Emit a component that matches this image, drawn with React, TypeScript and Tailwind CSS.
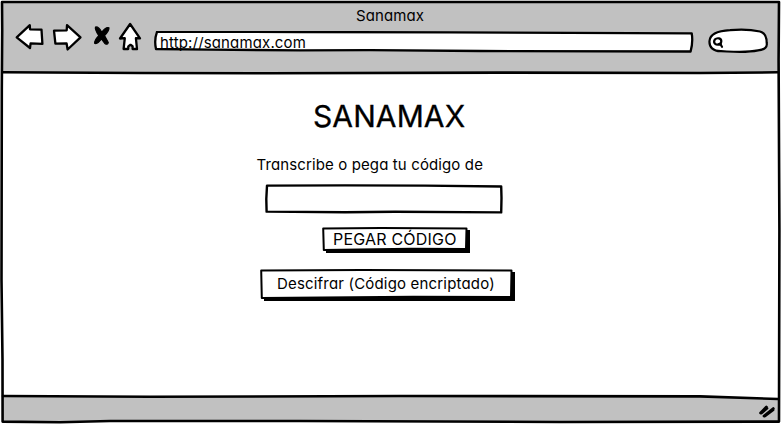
import type { ReactNode } from "react";

const line = {
  fill: "none",
  stroke: "#000",
  strokeLinecap: "round" as const,
  strokeLinejoin: "round" as const,
};

function WindowFrame() {
  return (
    <svg className="pointer-events-none absolute inset-0" width="781" height="424" viewBox="0 0 781 424" {...line} strokeWidth="2.6">
      <path d="M2 2 L779 2 L778.6 60 L779.4 230 L779 421.6 L560 422 L300 421 L110 421 L60 422.2 L2.6 421.6 L2.5 360 L1.5 280 L1.8 90 L2.2 30 Z" />
      <path d="M3 72.3 L140 73 L270 73.2 L500 72.6 L700 73 L778 72.3" />
      <path d="M3 396 L150 396.8 L400 396 L700 396.4 L778 399" />
    </svg>
  );
}

function Navigation() {
  return (
    <svg className="block shrink-0" width="128" height="32" viewBox="14 20 128 32" {...line} strokeWidth="2.3">
      <path fill="#fff" d="M16.7 37.4 L29.8 25.2 L30 29.3 L41.5 29.6 L42.4 43.8 L30.6 43.3 L30 48 Z" />
      <path fill="#fff" d="M54 30.6 L66.7 30.3 L67 25.2 L80.5 37.3 L67.6 49.5 L66.6 43.5 L55.4 43.7 Z" />
      <path fill="#000" strokeWidth="1.2" d="M95.5 27 Q99 26.6 101.7 32.3 Q106 26.5 109 27.8 Q109.2 31 104.5 35.6 L108.3 42.5 Q107.8 45.4 104.8 43.4 L101.4 39 Q97 45 94.6 43.3 Q94.4 40 98.8 35.8 Q94.5 29 95.5 27 Z" />
      <path fill="#fff" d="M130.1 24 L140 38.4 L135.9 38.2 L137 49 L132.6 49 L132.6 46.2 L130.5 44.8 L128.3 46.4 L128.2 49 L123.6 49 L124.8 38.2 L120 38.5 Z" />
    </svg>
  );
}

function AddressBar() {
  return (
    <div className="relative mt-[11px] ml-[11px] h-[22px] w-[541px] shrink-0">
      <svg className="absolute inset-0" width="541" height="22" viewBox="153 31 541 22" {...line} strokeWidth="2.3">
        <path fill="#fff" d="M157 31.9 L300 32 L450 32.4 L691.7 33.3 Q693.2 42 690.6 51.5 L480 51 L370 50.2 L300 50.4 L210 49.6 L156 49 Q154 40 157 31.9 Z" />
      </svg>
      <div className="relative ml-[7px] h-[22px] pt-[2px] text-[15px] leading-[20px] tracking-[0.15px]">http://sanamax.com</div>
    </div>
  );
}

function SearchBox() {
  return (
    <svg className="mt-[8px] ml-[14px] block shrink-0" width="62" height="26" viewBox="708 28 62 26" {...line} strokeWidth="2.2">
      <path fill="#fff" d="M709.5 41 C710 34 719 30.8 730 30.2 C742 29.2 752 29.8 760 31.5 C766 33 766.7 38 766.7 43 C767.5 47 765 49.4 758 50.4 C746 53 733 51.7 721 51.2 C713 51.3 709 47 709.5 41 Z" />
      <path d="M721 44.2 C715 46 713 42.5 714.8 39.6 C717 37.3 721.6 38 721.3 41.4 C721.2 43 720.3 44 718.7 44 M720.3 44 L722 46.8" />
    </svg>
  );
}

function Button({ width, height, className, children }: { width: number; height: number; className: string; children: ReactNode }) {
  return (
    <button className={`relative block ${className}`}>
      <svg className="absolute inset-0" width={width} height={height} {...line} strokeWidth="2">
        <path fill="#000" stroke="none" d={`M4 4 L${width} 3 L${width} ${height} L4 ${height} Z`} />
        <path fill="#fff" d={`M1.2 1.5 L${width * 0.4} 1.1 L${width - 3.5} 1.6 L${width - 4} ${height - 4} L${width * 0.6} ${height - 4.2} L1.8 ${height - 3} Z`} />
      </svg>
      <span className="relative block whitespace-nowrap text-left">{children}</span>
    </button>
  );
}

export default function App() {
  return (
    <div className="relative flex h-[424px] w-[781px] flex-col overflow-hidden bg-white font-['Inter','Liberation_Sans',sans-serif] text-black [font-feature-settings:'cv11']">
      <header className="mx-[2px] mt-[2px] h-[71px] shrink-0 bg-[#c1c1c1]">
        <div className="h-[18px] pt-[4px] pl-[354px] text-[15px] leading-[20px] tracking-[0.1px]">Sanamax</div>
        <div className="flex h-[34px] items-start pl-[12px]">
          <Navigation />
          <AddressBar />
          <SearchBox />
        </div>
      </header>
      <main className="flex flex-1 flex-col items-start">
        <h1 className="mt-[23px] ml-[313px] h-[40px] text-[30px] leading-[40px] tracking-[0.1px] [-webkit-text-stroke:0.3px_#000]">SANAMAX</h1>
        <label htmlFor="code" className="mt-[19px] ml-[256.5px] h-[20px] whitespace-nowrap text-[15px] leading-[20px] tracking-[0.12px]">Transcribe o pega tu código de</label>
        <div className="relative mt-[9px] ml-[265px] h-[30px] w-[238px]">
          <svg className="absolute inset-0" width="238" height="30" {...line} strokeWidth="2.4">
            <path d="M2 1.6 L80 1.4 L160 1.6 L236.2 2.5 L236.5 14 L236.2 28.4 L130 27.8 L80 28.2 L1.6 27.6 L1.3 15 Z" />
          </svg>
          <input id="code" aria-label="Código" className="relative h-full w-full bg-transparent px-2 outline-none" />
        </div>
        <Button width={148} height={26} className="mt-[13px] ml-[322px] h-[26px] w-[148px] pb-[2px] pl-[11px] text-[16px] leading-[22px] tracking-[0.2px]">PEGAR CÓDIGO</Button>
        <Button width={255} height={32} className="mt-[16px] ml-[260px] h-[32px] w-[255px] pb-[2px] pl-[17px] text-[15px] leading-[30px] tracking-[0.18px]">Descifrar (Código encriptado)</Button>
      </main>
      <footer className="mx-[2px] mb-[2px] flex h-[26px] shrink-0 items-center justify-end bg-[#c1c1c1] pr-[3px] [clip-path:polygon(0_0,698px_0,100%_3px,100%_100%,0_100%)]">
        <svg className="mt-[3px]" width="18" height="16" viewBox="758 403 18 16" {...line} strokeWidth="2.8">
          <path d="M760.6 413 L766.4 407 M761.5 413 L767 408.3 M764 416 L773.3 408.6 M765 416 L773 410" />
        </svg>
      </footer>
      <WindowFrame />
    </div>
  );
}
